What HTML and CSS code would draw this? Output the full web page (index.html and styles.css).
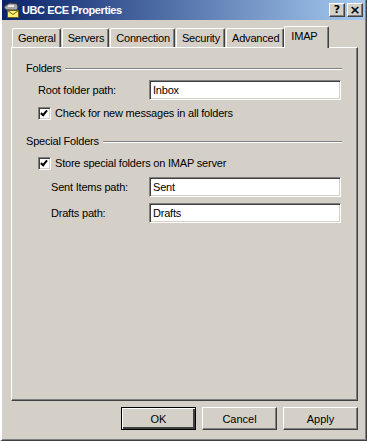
FILE: index.html
```html
<!DOCTYPE html>
<html lang="en">
<head>
    <meta charset="UTF-8">
    <title>UBC ECE Properties</title>
    <link rel="stylesheet" href="styles.css">
</head>
<body>
    <div class="window">
        <div class="titlebar">
            <svg class="app-icon" width="17" height="16" viewBox="0 0 17 16">
                <path d="M2 4 L7 1 L14 2 L15 5 L14 8 L4 8 L1 6 Z" fill="#a8a8a8" stroke="#404040" stroke-width="1"/>
                <rect x="5" y="3" width="6" height="2" fill="#e8e8e8"/>
                <rect x="4.5" y="8.5" width="11" height="7" fill="#f8f070" stroke="#6a6020" stroke-width="1"/>
                <path d="M4.5 8.5 L10 12.5 L15.5 8.5" fill="none" stroke="#6a6020" stroke-width="1"/>
            </svg>
            <span class="title">UBC ECE Properties</span>
            <div class="caption-buttons">
                <span class="cap-btn">?</span>
                <span class="cap-btn close">×</span>
            </div>
        </div>

        <div class="tabs">
            <span class="tab">General</span>
            <span class="tab">Servers</span>
            <span class="tab">Connection</span>
            <span class="tab">Security</span>
            <span class="tab">Advanced</span>
            <span class="tab active">IMAP</span>
        </div>

        <div class="panel">
            <div class="group-title"><span>Folders</span><i class="rule"></i></div>
            <div class="field first">
                <label class="field-label">Root folder path:</label>
                <span class="textbox">Inbox</span>
            </div>
            <div class="check">
                <span class="checkbox"></span>
                <span>Check for new messages in all folders</span>
            </div>

            <div class="group-title special"><span>Special Folders</span><i class="rule"></i></div>
            <div class="check second">
                <span class="checkbox"></span>
                <span>Store special folders on IMAP server</span>
            </div>
            <div class="field indent sent">
                <label class="field-label">Sent Items path:</label>
                <span class="textbox">Sent</span>
            </div>
            <div class="field indent drafts">
                <label class="field-label">Drafts path:</label>
                <span class="textbox">Drafts</span>
            </div>
        </div>

        <div class="buttons">
            <button class="btn default">OK</button>
            <button class="btn">Cancel</button>
            <button class="btn">Apply</button>
        </div>
    </div>
</body>
</html>
```

FILE: styles.css
```css
html, body {
    margin: 0;
    padding: 0;
}
body {
    background: #d4d0c8;
    font-family: "Liberation Sans", Arial, sans-serif;
    font-size: 11px;
    letter-spacing: -0.2px;
    color: #000;
}
.window {
    width: 367px;
    height: 441px;
    box-sizing: border-box;
    background: #d4d0c8;
    border-left: 2px solid #fff;
    border-right: 1px solid #404040;
    border-bottom: 1px solid #404040;
    box-shadow: inset -1px -1px 0 #808080;
    display: flex;
    flex-direction: column;
}
.titlebar {
    height: 20px;
    margin-right: 1px;
    background: linear-gradient(to right, #0a246a, #a6caf0);
    display: flex;
    align-items: center;
    padding-left: 1px;
    color: #fff;
}
.app-icon {
    flex: none;
}
.title {
    font-weight: bold;
    font-size: 11px;
    letter-spacing: -0.4px;
    margin-left: 2px;
}
.caption-buttons {
    margin-left: auto;
    display: flex;
    gap: 2px;
    margin-right: 2px;
}
.cap-btn {
    width: 16px;
    height: 14px;
    box-sizing: border-box;
    background: #d4d0c8;
    color: #000;
    border: 1px solid;
    border-color: #fff #404040 #404040 #fff;
    box-shadow: inset -1px -1px 0 #808080;
    font-family: "DejaVu Sans", sans-serif;
    font-weight: bold;
    font-size: 11px;
    letter-spacing: 0;
    line-height: 12px;
    text-align: center;
}
.cap-btn.close {
    font-size: 13px;
}
.tabs {
    display: flex;
    align-items: flex-end;
    height: 27px;
    padding-left: 9px;
    position: relative;
    z-index: 1;
}
.tab {
    height: 18px;
    line-height: 18px;
    padding: 0 4px 0 5px;
    margin-right: 1px;
    border-top: 1px solid #fff;
    border-left: 1px solid #fff;
    border-right: 1px solid #404040;
    box-shadow: inset -1px 0 0 #808080;
    border-radius: 2px 2px 0 0;
}
.tab:first-child {
    margin-left: 1px;
}
.tab.active {
    height: 21px;
    line-height: 18px;
    margin-bottom: -1px;
    margin-left: -1px;
    padding: 0 11px 0 6px;
    background: #d4d0c8;
}
.panel {
    flex: 1;
    margin: 0 8px 0 9px;
    border-top: 1px solid #fff;
    border-left: 1px solid #fff;
    border-right: 1px solid #404040;
    border-bottom: 1px solid #404040;
    box-shadow: inset -1px -1px 0 #808080;
    padding: 13px 15px 0 14px;
    display: flex;
    flex-direction: column;
}
.group-title {
    display: flex;
    align-items: center;
    height: 14px;
    gap: 4px;
}
.group-title.special {
    margin-top: 14px;
}
.rule {
    flex: 1;
    height: 0;
    border-top: 1px solid #808080;
    border-bottom: 1px solid #fff;
    margin-top: 1px;
}
.field {
    display: flex;
    align-items: center;
    height: 20px;
    padding-left: 12px;
}
.field.first {
    margin-top: 5px;
}
.field.indent {
    padding-left: 25px;
}
.field.sent {
    margin-top: 7px;
}
.field.drafts {
    margin-top: 6px;
}
.field-label {
    width: 111px;
    flex: none;
}
.field.indent .field-label {
    width: 98px;
}
.textbox {
    flex: 1;
    height: 20px;
    box-sizing: border-box;
    background: #fff;
    border: 1px solid;
    border-color: #808080 #fff #fff #808080;
    box-shadow: inset 1px 1px 0 #404040, inset -1px -1px 0 #d4d0c8;
    padding-left: 3px;
    line-height: 18px;
    margin-right: 1px;
}
.check {
    display: flex;
    align-items: center;
    height: 14px;
    padding-left: 12px;
    margin-top: 6px;
    gap: 4px;
}
.check.second {
    margin-top: 8px;
}
.checkbox {
    width: 13px;
    height: 13px;
    box-sizing: border-box;
    background: #fff;
    border: 1px solid;
    border-color: #808080 #fff #fff #808080;
    box-shadow: inset 1px 1px 0 #404040, inset -1px -1px 0 #d4d0c8;
    position: relative;
}
.checkbox::after {
    content: "";
    position: absolute;
    left: 3px;
    top: 1px;
    width: 2px;
    height: 5px;
    border: solid #000;
    border-width: 0 2px 2px 0;
    transform: rotate(40deg);
}
.buttons {
    display: flex;
    justify-content: flex-end;
    gap: 6px;
    padding: 6px 8px 10px 0;
}
.btn {
    width: 75px;
    height: 23px;
    box-sizing: border-box;
    background: #d4d0c8;
    font-family: "Liberation Sans", Arial, sans-serif;
    font-size: 11px;
    color: #000;
    border: 1px solid;
    border-color: #fff #404040 #404040 #fff;
    box-shadow: inset -1px -1px 0 #808080;
    padding: 0;
}
.btn.default {
    border: 1px solid #000;
    box-shadow: inset 1px 1px 0 #fff, inset -2px -2px 0 #404040, inset -1px -1px 0 #808080;
}
```
